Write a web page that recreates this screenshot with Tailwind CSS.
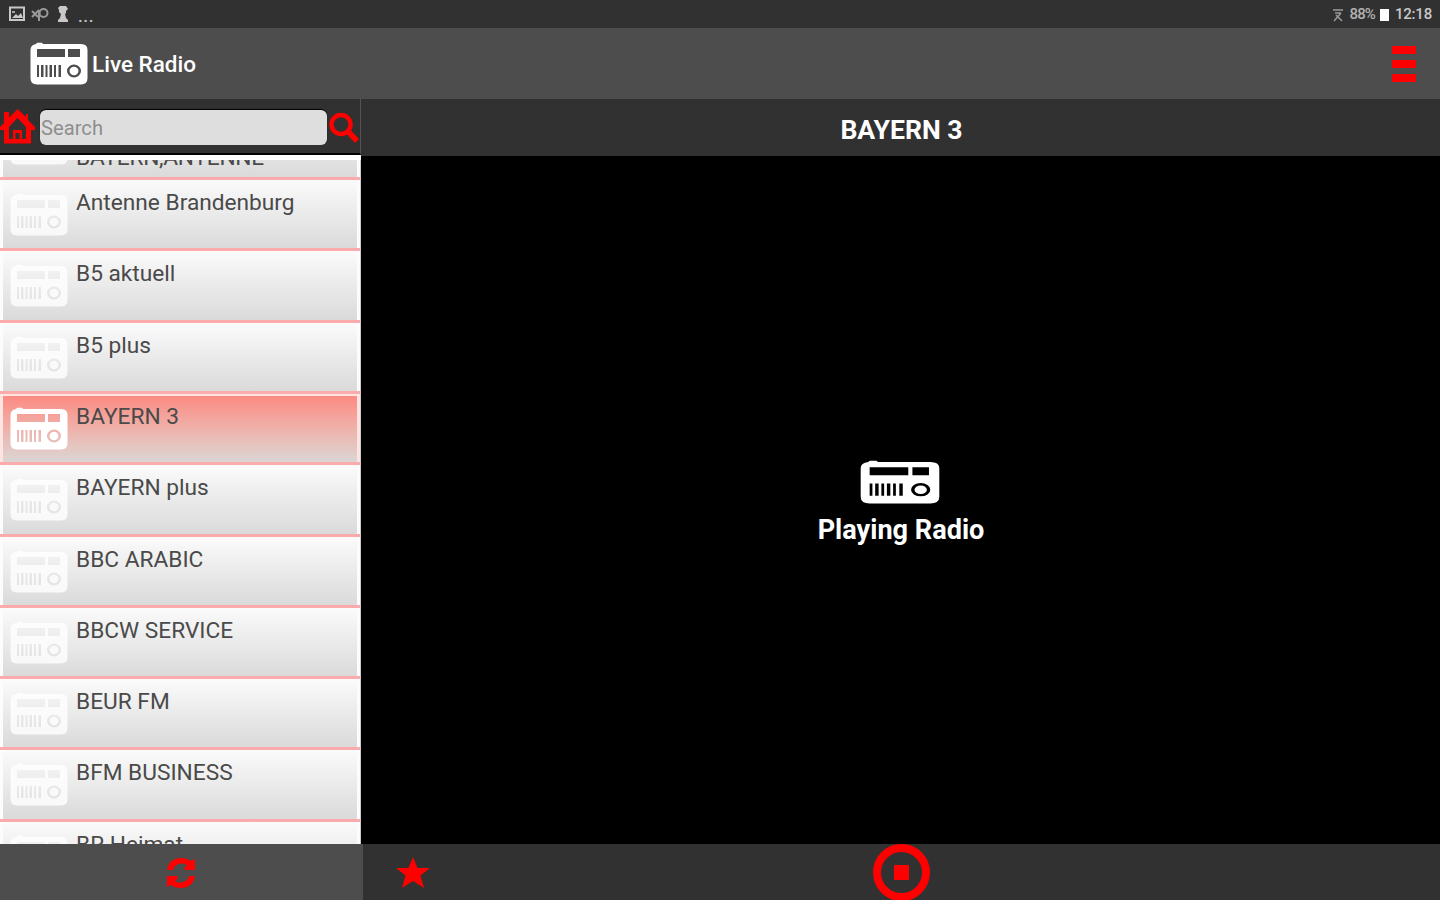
<!DOCTYPE html>
<html lang="en">
<head>
    <meta charset="UTF-8">
    <meta name="viewport" content="width=device-width, initial-scale=1.0">
    <title>Live Radio</title>
    <script src="https://cdn.jsdelivr.net/npm/@tailwindcss/browser@4"></script>
</head>
<body class="w-[1440px] h-[900px] overflow-hidden bg-black font-['Roboto',sans-serif] flex flex-col">

    <svg class="hidden">
        <symbol id="radio" viewBox="0 0 58 43" preserveAspectRatio="none">
            <path fill-rule="evenodd" d="M6 2L7 .8H12L13 2H51Q57.500 2 57.500 8V36Q57.500 42.500 51 42.500H7Q.5 42.500 .5 36V8Q.5 3 6 2Z
                M7 7H35V15H7Z M38 7H50V15H38Z
                M7 23H9V35H7Z M11 23H13.500V35H11Z M15.500 23H17.500V35H15.500Z M19.500 23H22V35H19.500Z M24 23H26V35H24Z M28.500 23H31V35H28.500Z
                M37 29A7 6.500 0 1 0 51 29A7 6.500 0 1 0 37 29Z
                M39.500 29A4.500 4.200 0 1 0 48.500 29A4.500 4.200 0 1 0 39.500 29Z"/>
        </symbol>
    </svg>

    <!-- Status bar -->
    <div class="h-7 shrink-0 bg-[#313131] flex items-center justify-between pl-[9px] pr-2 text-[#c8c8c8]">
        <div class="flex items-center">
            <svg class="w-4 h-4" viewBox="0 0 16 16" fill="none" stroke="#c8c8c8" stroke-width="2"><rect x="1" y="1.500" width="14" height="12.500"/><path d="M3 12L7 8L9 10L12 7L14 12Z" fill="#c8c8c8" stroke="none"/><path d="M3 6H6" stroke-width="1.500"/></svg>
            <svg class="w-[18px] h-4 ml-1.5" viewBox="0 0 18 16" fill="none" stroke="#999" stroke-width="2"><path d="M1 5L7 11M1 11L8 4M8 15V4"/><circle cx="12.500" cy="7" r="4"/></svg>
            <svg class="w-3 h-[18px] ml-2" viewBox="0 0 12 18" fill="#c8c8c8"><path d="M3 1H9L11 4L9 6V8L8 9L9 13L11 15V17H1V15L3 13L4 9L2 7V5L1 3Z"/></svg>
            <span class="ml-[9px] mt-1 text-[17px] leading-6 tracking-[.6px] font-medium">...</span>
        </div>
        <div class="flex items-center text-[15px] font-medium pt-px">
            <svg class="w-3 h-3.5 mr-1.5" viewBox="0 0 12 14" fill="none" stroke="#999" stroke-width="1.500"><path d="M1 2H11M3 5H9M2 13L9 5M4 7L10 13"/></svg>
            <span class="tracking-[-.9px] text-[#b0b0b0]">88%</span>
            <span class="w-[9px] h-3 ml-[5px] mr-1.5 bg-white"></span>
            <span class="tracking-[-.2px]">12:18</span>
        </div>
    </div>

    <!-- App header -->
    <header class="h-[71px] shrink-0 bg-[#4d4d4d] flex items-center justify-between pl-[30px] pr-6">
        <div class="flex items-center">
            <svg class="w-[58px] h-[43px] fill-white"><use href="#radio"/></svg>
            <h1 class="ml-1 pt-0.5 text-[22.500px] font-medium text-white whitespace-nowrap">Live Radio</h1>
        </div>
        <div class="flex flex-col gap-1.5">
            <span class="w-6 h-2 bg-[#f00]"></span>
            <span class="w-6 h-2 bg-[#f00]"></span>
            <span class="w-6 h-2 bg-[#f00]"></span>
        </div>
    </header>

    <main class="flex h-[745px] shrink-0">
        <!-- Station list -->
        <aside class="w-[361px] shrink-0 flex flex-col bg-white">
            <div class="h-14 shrink-0 bg-[#313131] border-b-2 border-b-black border-r border-r-[#555] flex items-center">
                <svg class="w-[35px] h-[36px] shrink-0 mt-0.5" viewBox="0 0 35 36" fill="#f00" fill-rule="evenodd"><path d="M17.500 0L26 8V5H28V11L35 18V21H31V34.500H4V21H0V18L4 14V3H9V8L10 8Z M17.500 9L9 18V30H13V21H22V30H26V18Z M15.500 24H19.500V30H15.500Z"/></svg>
                <div class="ml-[5px] w-[287px] h-[35px] mt-0.5 rounded-md bg-[#dedede] shadow-[0_-1px_1px_#000] text-[20.200px] leading-[37px] text-[#8e8e8e] pl-px">Search</div>
                <svg class="w-[31px] h-8 shrink-0 ml-0.5 mt-[3px]" viewBox="0 0 31 32" fill="none" stroke="#f00" stroke-width="4.500"><circle cx="12" cy="12.500" r="9.500"/><path d="M19 19.500L28 29" stroke-width="5.500"/></svg>
            </div>
            <div class="mt-[5px] h-[684px] overflow-hidden border-r border-[#ccc]">
                <div id="stations" class="-mt-[51.200px]"></div>
            </div>
        </aside>

        <!-- Player -->
        <section class="flex-1 flex flex-col">
            <div class="h-[57px] shrink-0 bg-[#313131] flex items-center justify-center pt-1 pl-0.5">
                <h2 class="text-[26.600px] font-bold text-white">BAYERN 3</h2>
            </div>
            <div class="flex-1 flex flex-col items-center pt-[304px] bg-black">
                <svg class="w-20 h-11 mr-px fill-white"><use href="#radio"/></svg>
                <p class="mt-[7px] pl-px text-[27.100px] leading-[38px] font-bold text-white">Playing Radio</p>
            </div>
        </section>
    </main>

    <!-- Bottom bar -->
    <footer class="h-14 shrink-0 flex">
        <div class="w-[363px] bg-[#4d4d4d] flex items-center justify-center pr-0.5">
            <svg class="w-7 h-[30px] mt-0.5" viewBox="0 0 28 30" fill="#f00"><path d="M0 12C1 4 7 0 14 0Q20 0 24 3L28 1V12H18L17 10L20 7Q17 5 14 5.500C9 6 7 9 6 12Z"/><path d="M28 18C27 26 21 30 14 30Q8 30 4 27L0 29V18H10L11 20L8 23Q11 25 14 24.500C19 24 21 21 22 18Z"/></svg>
        </div>
        <div class="flex-1 bg-[#313131] flex items-center">
            <svg class="w-[34px] h-[31px] ml-[33px]" viewBox="0 0 34 31" fill="#f00"><path d="M17 0L21.500 11H34L24.500 18.500L28 31L17 24L6 31L9.500 18.500L0 11H12.500Z"/></svg>
            <div class="ml-[443px] w-[57px] h-[57px] rounded-full border-8 border-[#f00] flex items-center justify-center">
                <span class="w-[15px] h-[15px] bg-[#f00]"></span>
            </div>
        </div>
    </footer>

    <script>
        const stations = [
            'BAYERN,ANTENNE',
            'Antenne Brandenburg',
            'B5 aktuell',
            'B5 plus',
            'BAYERN 3',
            'BAYERN plus',
            'BBC ARABIC',
            'BBCW SERVICE',
            'BEUR FM',
            'BFM BUSINESS',
            'BR Heimat'
        ];
        const active = 'BAYERN 3';

        // the first entry sits on the second text line of its row
        document.getElementById('stations').innerHTML = stations.map((name, i) => `
            <div class="h-[71.300px] border-b-[3px] border-[#fbabab] ${name === active ? 'bg-[#ffe4e2] pt-0.5' : 'bg-[#fcfcfc]'} px-[3px]">
                <div class="h-full flex pl-[7px] bg-linear-to-b ${name === active ? 'from-[#fb8a82] to-[#dad6d4]' : 'from-[#fbfbfb] to-[#dadada]'}">
                    <svg class="w-[58px] h-[43px] shrink-0 ${name === active ? 'mt-[11px] fill-white' : 'mt-[13px] fill-white/80'}"><use href="#radio"/></svg>
                    <span class="ml-2 text-[22.700px] leading-[30px] text-[#4a4a4a] whitespace-nowrap ${i === 0 ? 'mt-[34px]' : name === active ? 'mt-1.5' : 'mt-2'} ${i === 0 ? 'tracking-[-.25px]' : ''}">${name}</span>
                </div>
            </div>
        `).join('');
    </script>
</body>
</html>
